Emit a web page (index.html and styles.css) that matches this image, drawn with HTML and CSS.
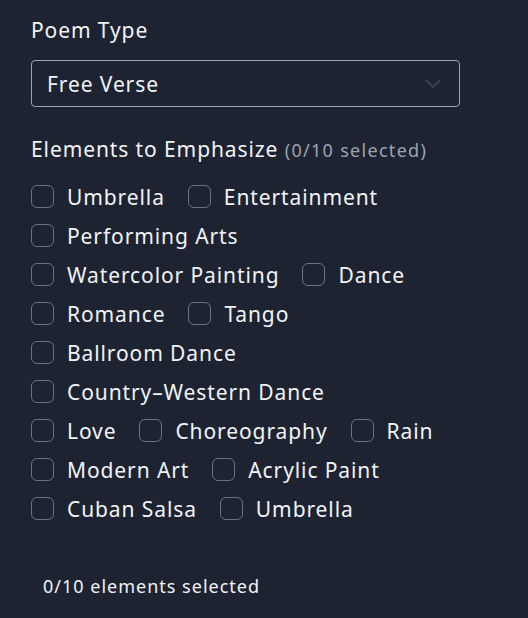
FILE: index.html
```html
<!DOCTYPE html>
<html lang="en">
<head>
<meta charset="utf-8">
<title>Poem Settings</title>
<link rel="stylesheet" href="styles.css">
</head>
<body>
<div class="panel">
  <div class="field-label">Poem Type</div>
  <div class="select">
    <span class="select-value">Free Verse</span>
    <svg class="chevron" width="16" height="10" viewBox="0 0 16 10" fill="none"><path d="M1.5 1.5 L8 8 L14.5 1.5" stroke="#3a4152" stroke-width="2" stroke-linecap="round" stroke-linejoin="round"/></svg>
  </div>

  <div class="field-label section">Elements to Emphasize <span class="count">(0/10 selected)</span></div>

  <div class="options">
    <div class="row">
      <label class="opt"><span class="box"></span>Umbrella</label>
      <label class="opt"><span class="box"></span>Entertainment</label>
    </div>
    <div class="row">
      <label class="opt"><span class="box"></span>Performing Arts</label>
    </div>
    <div class="row">
      <label class="opt"><span class="box"></span>Watercolor Painting</label>
      <label class="opt"><span class="box"></span>Dance</label>
    </div>
    <div class="row">
      <label class="opt"><span class="box"></span>Romance</label>
      <label class="opt"><span class="box"></span>Tango</label>
    </div>
    <div class="row">
      <label class="opt"><span class="box"></span>Ballroom Dance</label>
    </div>
    <div class="row">
      <label class="opt"><span class="box"></span>Country–Western Dance</label>
    </div>
    <div class="row">
      <label class="opt"><span class="box"></span>Love</label>
      <label class="opt"><span class="box"></span>Choreography</label>
      <label class="opt"><span class="box"></span>Rain</label>
    </div>
    <div class="row">
      <label class="opt"><span class="box"></span>Modern Art</label>
      <label class="opt"><span class="box"></span>Acrylic Paint</label>
    </div>
    <div class="row">
      <label class="opt"><span class="box"></span>Cuban Salsa</label>
      <label class="opt"><span class="box"></span>Umbrella</label>
    </div>
  </div>

  <div class="footer">0/10 elements selected</div>
</div>
</body>
</html>
```

FILE: styles.css
```css
html, body {
  margin: 0;
  padding: 0;
  background: #1e2332;
}
body {
  width: 528px;
  height: 618px;
  overflow: hidden;
  font-family: "Noto Sans", "Open Sans", sans-serif;
  color: #f1f3f6;
}
.panel {
  padding: 16px 68px 0 31px;
}
.field-label {
  font-size: 21px;
  line-height: 28px;
  letter-spacing: 0.9px;
}
.section {
  margin-top: 28px;
}
.count {
  font-size: 18px;
  letter-spacing: 1.3px;
  color: #9ca3af;
}
.select {
  margin-top: 16px;
  height: 47px;
  box-sizing: border-box;
  border: 1px solid #9aa3b5;
  border-radius: 4px;
  display: flex;
  align-items: center;
  justify-content: space-between;
  padding: 0 18px 0 15px;
}
.select-value {
  font-size: 21px;
  letter-spacing: 0.9px;
}
.chevron {
  display: block;
}
.options {
  margin-top: 13px;
  display: flex;
  flex-direction: column;
}
.row {
  display: flex;
  align-items: center;
  height: 39px;
  gap: 23px;
}
.opt {
  display: flex;
  align-items: center;
  gap: 13px;
  font-size: 21px;
  letter-spacing: 0.9px;
  white-space: nowrap;
}
.box {
  width: 23px;
  height: 23px;
  box-sizing: border-box;
  border: 1.5px solid #6b7383;
  border-radius: 6px;
  flex: none;
}
.footer {
  margin-top: 46px;
  padding-left: 12px;
  font-size: 18px;
  line-height: 24px;
  letter-spacing: 1px;
}
```
